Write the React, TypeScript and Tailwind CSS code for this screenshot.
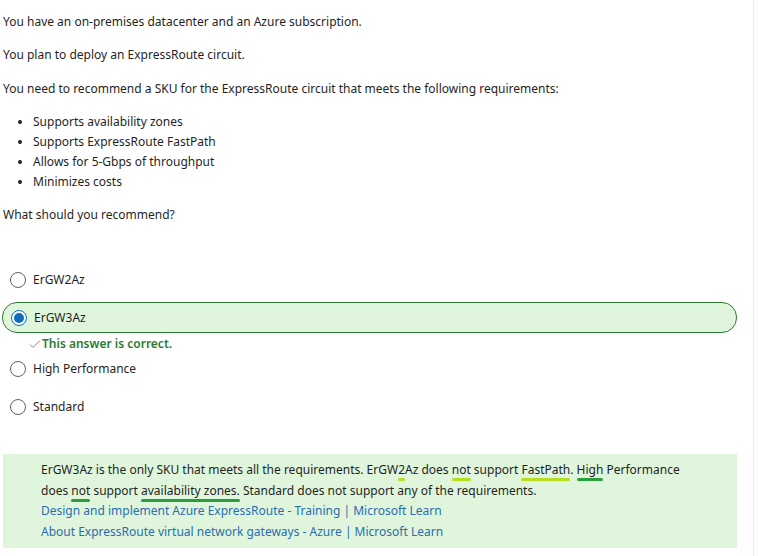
import React from "react";

function Mark({ children, color }: { children: React.ReactNode; color: string }) {
  return (
    <span className="relative">
      {children}
      <span
        className={`absolute left-0 right-0 -bottom-[3px] h-[3px] rounded-full ${color}`}
      />
    </span>
  );
}

function Radio({ checked }: { checked?: boolean }) {
  return (
    <span
      className={`flex h-[16px] w-[16px] shrink-0 items-center justify-center rounded-full border ${
        checked ? "border-[#0f6cbd]" : "border-[#616161]"
      } bg-white`}
    >
      {checked && <span className="h-[10px] w-[10px] rounded-full bg-[#0f6cbd]" />}
    </span>
  );
}

function Option({ label }: { label: string }) {
  return (
    <div className="flex h-[30px] items-center gap-[7px] pl-[10px]">
      <Radio />
      <span>{label}</span>
    </div>
  );
}

export default function App() {
  const yg = "bg-[#b8dc1e]";
  const dg = "bg-[#2a9d3f]";
  return (
    <div
      className="relative h-[556px] w-[758px] overflow-hidden bg-white text-[12px] leading-[20px] text-[#1f1f1f]"
      style={{ fontFamily: '"Noto Sans", "Open Sans", sans-serif' }}
    >
      <div className="absolute right-[4px] top-0 h-full w-px bg-[#ececec]" />
      <div className="w-[735px] pl-[3px] pt-[12px]">
        <p>You have an on-premises datacenter and an Azure subscription.</p>
        <p className="mt-[13px]">You plan to deploy an ExpressRoute circuit.</p>
        <p className="mt-[14px]">
          You need to recommend a SKU for the ExpressRoute circuit that meets the following
          requirements:
        </p>
        <ul className="mt-[13px] list-disc pl-[30px]">
          <li>Supports availability zones</li>
          <li>Supports ExpressRoute FastPath</li>
          <li>Allows for 5-Gbps of throughput</li>
          <li>Minimizes costs</li>
        </ul>
        <p className="mt-[13px]">What should you recommend?</p>
      </div>

      <div className="mt-[40px] w-[737px]">
        <Option label="ErGW2Az" />
        <div className="ml-[2px] mt-[7px] flex h-[31px] items-center gap-[7px] rounded-[15px] border border-[#2f7a33] bg-[#dff6dd] pl-[8px]">
          <Radio checked />
          <span>ErGW3Az</span>
        </div>
        <div className="flex h-[22px] items-center pl-[29px] font-semibold text-[#2b7a2f]">
          <svg width="12" height="10" viewBox="0 0 12 10" className="mr-[1px]">
            <path d="M1 5.5 L4 8.5 L11 1.5" fill="none" stroke="#8a8a8a" strokeWidth="1" />
          </svg>
          This answer is correct.
        </div>
        <div className="-mt-[1px]">
          <Option label="High Performance" />
        </div>
        <div className="mt-[8px]">
          <Option label="Standard" />
        </div>
      </div>

      <div className="ml-[3px] mt-[32px] w-[734px] bg-[#dff6dd] py-[6px] pl-[38px] pr-[20px] leading-[20.5px]">
        <p>
          ErGW3Az is the only SKU that meets all the requirements. ErGW
          <Mark color={yg}>2</Mark>Az does <Mark color={yg}>not</Mark> support{" "}
          <Mark color={yg}>FastPath</Mark>. <Mark color={dg}>High</Mark> Performance
          <br />
          does <Mark color={dg}>not</Mark> support <Mark color={dg}>availability zones.</Mark>{" "}
          Standard does not support any of the requirements.
        </p>
        <p>
          <a className="text-[#2b6cb0]">Design and implement Azure ExpressRoute - Training | Microsoft Learn</a>
        </p>
        <p>
          <a className="text-[#2b6cb0]">About ExpressRoute virtual network gateways - Azure | Microsoft Learn</a>
        </p>
      </div>
    </div>
  );
}
